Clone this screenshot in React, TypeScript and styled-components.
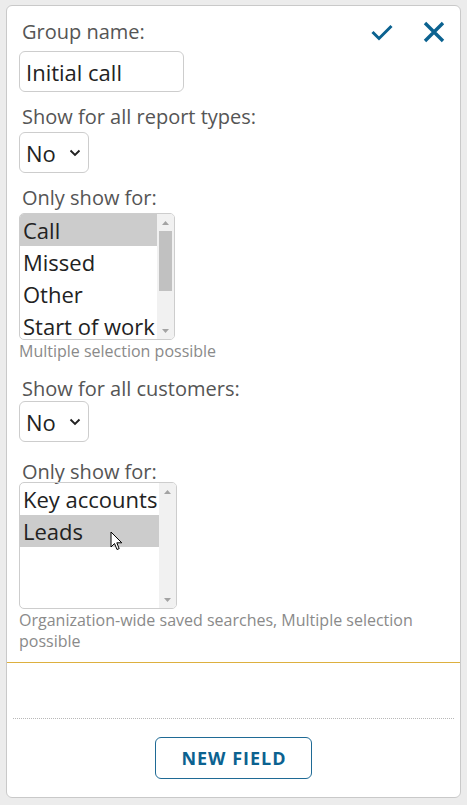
import React from "react";
import styled, { createGlobalStyle } from "styled-components";

const GlobalStyle = createGlobalStyle`
  body {
    margin: 0;
    background: #ececec;
    font-family: "Open Sans", "Noto Sans", sans-serif;
  }
  * {
    box-sizing: border-box;
  }
`;

const Page = styled.div`
  padding: 5px 6px 7px 6px;
`;

const Card = styled.div`
  background: #fff;
  border: 1px solid #c9c9c9;
  border-radius: 6px;
  overflow: hidden;
`;

const Form = styled.div`
  padding: 11px 15px 10px 12px;
`;

const HeaderRow = styled.div`
  display: flex;
  justify-content: space-between;
  align-items: center;
  height: 30px;
`;

const Actions = styled.div`
  display: flex;
  align-items: center;
  gap: 30px;
  color: #0b6290;
`;

const IconButton = styled.button`
  display: flex;
  align-items: center;
  justify-content: center;
  padding: 0;
  border: none;
  background: none;
  color: inherit;
  cursor: pointer;
`;

const Label = styled.div`
  font-size: 20px;
  line-height: 24px;
  color: #555;
  padding-left: 3px;
`;

const Group = styled.div<{ $gap: number; $fieldGap: number }>`
  margin-top: ${({ $gap }) => $gap}px;
  & > :nth-child(2) {
    margin-top: ${({ $fieldGap }) => $fieldGap}px;
  }
`;

const TextInput = styled.input`
  display: block;
  margin-top: 4px;
  width: 165px;
  height: 41px;
  padding: 0 6px;
  border: 1px solid #cdcdcd;
  border-radius: 6px;
  font-family: inherit;
  font-size: 22px;
  color: #222;
  outline: none;
`;

const SelectBox = styled.div`
  display: flex;
  align-items: center;
  justify-content: space-between;
  width: 70px;
  height: 41px;
  padding: 0 7px 0 6px;
  border: 1px solid #cdcdcd;
  border-radius: 6px;
  font-size: 22px;
  color: #222;
`;

const ListBox = styled.div<{ $width: number }>`
  position: relative;
  display: flex;
  width: ${({ $width }) => $width}px;
  height: 127px;
  border: 1px solid #cdcdcd;
  border-radius: 5px;
  overflow: hidden;
`;

const Options = styled.div`
  flex: 1;
  overflow: hidden;
`;

const Option = styled.div<{ $selected?: boolean }>`
  height: 32px;
  line-height: 32px;
  padding: 0 3px;
  font-size: 22px;
  color: #222;
  white-space: nowrap;
  background: ${({ $selected }) => ($selected ? "#cccccc" : "transparent")};
`;

const ScrollBar = styled.div`
  display: flex;
  flex-direction: column;
  align-items: center;
  width: 17px;
  flex-shrink: 0;
  background: #f1f1f1;
  padding: 0 2px;
`;

const Arrow = styled.div`
  display: flex;
  align-items: center;
  justify-content: center;
  height: 17px;
  width: 100%;
`;

const Track = styled.div`
  flex: 1;
  width: 100%;
`;

const Thumb = styled.div`
  width: 100%;
  background: #c1c1c1;
`;

const Cursor = styled.svg`
  position: absolute;
  left: 90px;
  top: 48px;
`;

const Hint = styled.div`
  margin-top: 1px;
  font-size: 16px;
  line-height: 21px;
  color: #8a8a8a;
`;

const Divider = styled.div`
  height: 1px;
  background: #ddb03f;
`;

const Blank = styled.div`
  height: 56px;
  margin: 0 6px;
  border-bottom: 1px dotted #b8b8b8;
`;

const Footer = styled.div`
  display: flex;
  justify-content: center;
  padding: 18px 0 18px;
`;

const PrimaryButton = styled.button`
  width: 157px;
  height: 42px;
  padding: 0 0 0 1px;
  border: 1px solid #1f6a95;
  border-radius: 6px;
  background: #fff;
  font-family: inherit;
  font-size: 18px;
  font-weight: 700;
  letter-spacing: 1px;
  color: #0b6290;
  cursor: pointer;
`;

function Chevron() {
  return (
    <svg width="12" height="8" viewBox="0 0 12 8">
      <path d="M1.5 1.5 L6 6 L10.5 1.5" fill="none" stroke="#222" strokeWidth="1.9" />
    </svg>
  );
}

function Select({ value }: { value: string }) {
  return (
    <SelectBox>
      <span>{value}</span>
      <Chevron />
    </SelectBox>
  );
}

type ListProps = {
  items: string[];
  selected: string;
  width: number;
  thumb?: { top: number; height: number };
  showCursor?: boolean;
};

function MultiList({ items, selected, width, thumb, showCursor }: ListProps) {
  return (
    <ListBox $width={width}>
      <Options>
        {items.map((item) => (
          <Option key={item} $selected={item === selected}>
            {item}
          </Option>
        ))}
      </Options>
      <ScrollBar>
        <Arrow>
          <svg width="7" height="4" viewBox="0 0 7 4">
            <path d="M0 4 L3.5 0 L7 4 Z" fill="#a3a3a3" />
          </svg>
        </Arrow>
        <Track>
          {thumb && <Thumb style={{ marginTop: thumb.top, height: thumb.height }} />}
        </Track>
        <Arrow>
          <svg width="7" height="4" viewBox="0 0 7 4">
            <path d="M0 0 L3.5 4 L7 0 Z" fill="#a3a3a3" />
          </svg>
        </Arrow>
      </ScrollBar>
      {showCursor && (
        <Cursor width="14" height="20" viewBox="0 0 14 20">
          <path
            d="M1 1 L1 16 L4.5 12.5 L7 18.5 L9.2 17.6 L6.8 11.8 L11.8 11.8 Z"
            fill="#fff"
            stroke="#000"
            strokeWidth="1"
            strokeLinejoin="round"
          />
        </Cursor>
      )}
    </ListBox>
  );
}

export default function App() {
  return (
    <>
      <GlobalStyle />
      <Page>
        <Card>
          <Form>
            <HeaderRow>
              <Label>Group name:</Label>
              <Actions>
                <IconButton aria-label="Save">
                  <svg width="22" height="17" viewBox="0 0 22 17">
                    <path d="M1.5 8 L8 14.5 L20.5 2" fill="none" stroke="currentColor" strokeWidth="3" />
                  </svg>
                </IconButton>
                <IconButton aria-label="Cancel">
                  <svg width="22" height="22" viewBox="0 0 22 22">
                    <path d="M2 2 L20 20 M20 2 L2 20" fill="none" stroke="currentColor" strokeWidth="3.4" />
                  </svg>
                </IconButton>
              </Actions>
            </HeaderRow>
            <TextInput defaultValue="Initial call" readOnly />

            <Group $gap={13} $fieldGap={3}>
              <Label>Show for all report types:</Label>
              <Select value="No" />
            </Group>

            <Group $gap={13} $fieldGap={3}>
              <Label>Only show for:</Label>
              <MultiList
                items={["Call", "Missed", "Other", "Start of work"]}
                selected="Call"
                width={156}
                thumb={{ top: 0, height: 60 }}
              />
              <Hint>Multiple selection possible</Hint>
            </Group>

            <Group $gap={15} $fieldGap={0}>
              <Label>Show for all customers:</Label>
              <Select value="No" />
            </Group>

            <Group $gap={18} $fieldGap={-2}>
              <Label>Only show for:</Label>
              <MultiList
                items={["Key accounts", "Leads"]}
                selected="Leads"
                width={158}
                showCursor
              />
              <Hint>Organization-wide saved searches, Multiple selection possible</Hint>
            </Group>
          </Form>
          <Divider />
          <Blank />
          <Footer>
            <PrimaryButton>NEW FIELD</PrimaryButton>
          </Footer>
        </Card>
      </Page>
    </>
  );
}
